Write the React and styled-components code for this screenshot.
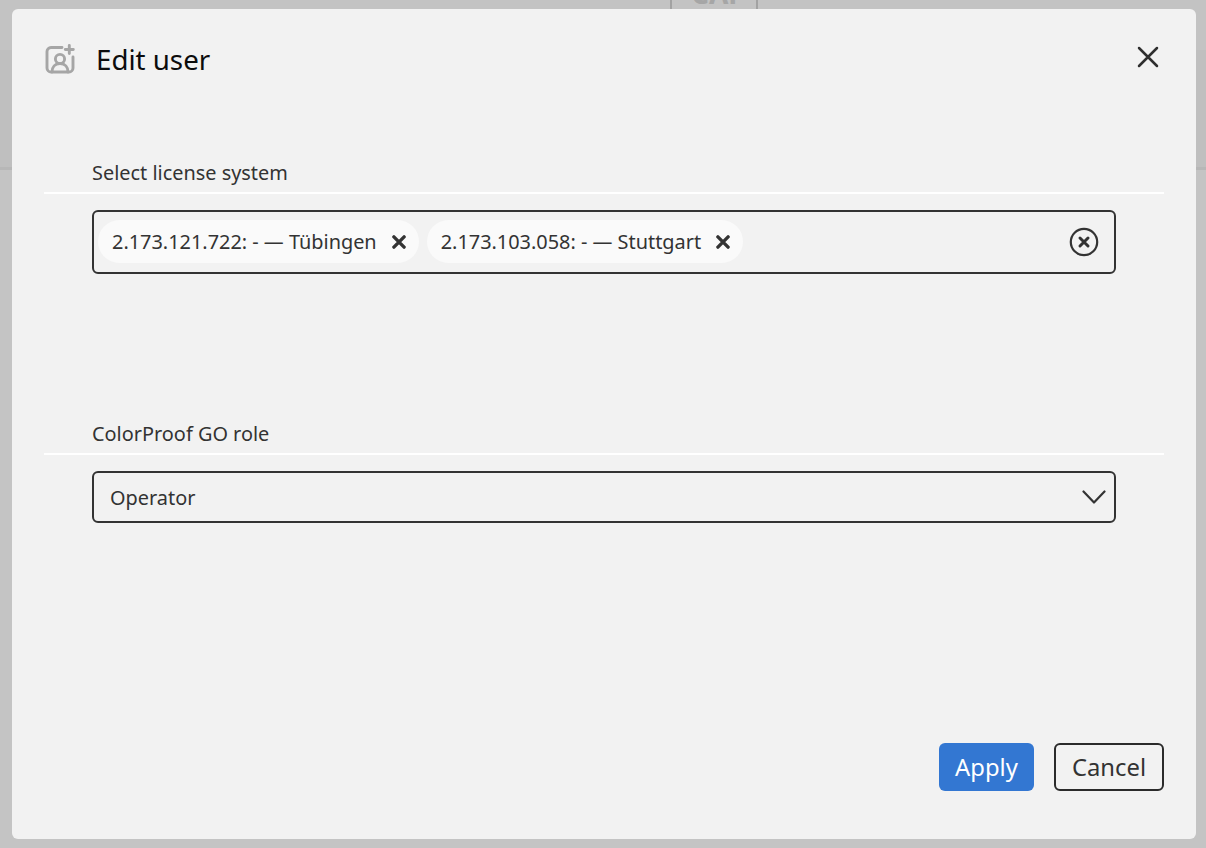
import React from "react";
import styled, { createGlobalStyle } from "styled-components";

const Global = createGlobalStyle`
  html, body { margin: 0; padding: 0; height: 100%; }
  body { font-family: "Noto Sans", "Liberation Sans", sans-serif; background: #c4c4c4; overflow: hidden; }
  * { box-sizing: border-box; }
`;

const Backdrop = styled.div`
  width: 1206px;
  height: 848px;
  position: relative;
  background: #c4c4c4;
  display: flex;
  flex-direction: column;
`;
const BackTop = styled.div`
  height: 50px;
  background: #c3c3c3;
  display: flex;
  justify-content: center;
  padding-left: 222px;
`;
const BackTab = styled.div`
  width: 88px;
  height: 9px;
  border: 2px solid #a2a2a2;
  border-top: 0;
  border-bottom: 0;
  overflow: hidden;
  color: #a6a6a6;
  font-size: 28px;
  font-weight: 700;
  line-height: 0;
  padding-left: 19px;
  white-space: nowrap;
`;
const BackTabText = styled.span`
  display: block;
  margin-top: -7px;
`;
const BackStrip = styled.div`
  height: 120px;
  background: #bfbfbf;
  border-bottom: 3px solid #b7b7b7;
`;

const Modal = styled.div`
  position: absolute;
  left: 12px;
  top: 9px;
  width: 1184px;
  height: 830px;
  background: #f2f2f2;
  border-radius: 6px;
  display: flex;
  flex-direction: column;
`;
const Header = styled.header`
  height: 100px;
  padding: 34px 36px 0 32px;
  display: flex;
  align-items: flex-start;
`;
const TitleIcon = styled.svg`
  width: 34px;
  height: 34px;
  flex: none;
`;
const Title = styled.h1`
  margin: 0 0 0 18px;
  font-size: 27.7px;
  font-weight: 400;
  line-height: 32px;
  color: #0c0c0c;
  flex: 1;
`;
const CloseButton = styled.button`
  border: 0;
  background: none;
  padding: 0;
  width: 24px;
  height: 24px;
  margin-top: 2px;
  display: block;
  color: #2f2f2f;
`;
const Section = styled.section`
  display: flex;
  flex-direction: column;
  margin: ${(p) => p.$top}px 32px 0;
`;
const Label = styled.div`
  font-size: 19.9px;
  line-height: 24px;
  color: #333;
  padding-left: 48px;
  height: 31px;
`;
const Rule = styled.div`
  height: 2px;
  background: #ffffff;
`;
const MultiBox = styled.div`
  margin: 16px 48px 0;
  height: 64px;
  border: 2px solid #333;
  border-radius: 6px;
  padding: 0 15px 0 4px;
  display: flex;
  align-items: center;
  gap: 8px;
`;
const Chip = styled.div`
  height: 43px;
  border-radius: 22px;
  background: #fafafa;
  padding: 0 13px 1px 14px;
  display: flex;
  align-items: center;
  gap: 15px;
  font-size: 19.9px;
  color: #333;
  white-space: nowrap;
  margin-top: -1px;
`;
const ChipX = styled.svg`
  width: 14px;
  height: 14px;
  flex: none;
  margin-top: 1px;
`;
const Spacer = styled.div`
  flex: 1;
`;
const ClearIcon = styled.svg`
  width: 30px;
  height: 30px;
  flex: none;
`;
const SelectBox = styled.div`
  margin: 16px 48px 0;
  height: 52px;
  border: 2px solid #333;
  border-radius: 6px;
  padding: 0 8px 0 16px;
  display: flex;
  align-items: center;
  justify-content: space-between;
  font-size: 19.9px;
  color: #333;
`;
const Footer = styled.footer`
  margin-top: auto;
  padding: 0 32px 48px;
  display: flex;
  justify-content: flex-end;
  gap: 20px;
`;
const Button = styled.button`
  height: 48px;
  width: ${(p) => p.$w}px;
  border-radius: 6px;
  font-family: inherit;
  font-size: 23.8px;
  padding: 0 0 1px;
  border: ${(p) => (p.$primary ? "0" : "2px solid #2b2b2b")};
  background: ${(p) => (p.$primary ? "#3377d2" : "transparent")};
  color: ${(p) => (p.$primary ? "#fff" : "#333")};
`;

const X = () => (
  <ChipX viewBox="0 0 14 14" fill="none" stroke="#333" strokeWidth="3.4" strokeLinecap="round">
    <path d="M1.9 1.9l10.2 10.2M12.1 1.9L1.900 12.100" />
  </ChipX>
);

export default function App() {
  return (
    <>
      <Global />
      <Backdrop>
        <BackTop>
          <BackTab><BackTabText>CAP</BackTabText></BackTab>
        </BackTop>
        <BackStrip />
        <Modal>
          <Header>
            <TitleIcon viewBox="0 0 34 34" fill="none" stroke="#a6a6a6" strokeWidth="2.900" strokeLinecap="round" strokeLinejoin="round">
              <path d="M18 4.500H7a4 4 0 0 0-4 4V25a4 4 0 0 0 4 4H25a4 4 0 0 0 4-4V14" />
              <circle cx="16" cy="16" r="4.600" />
              <path d="M8 29c0-5 3-8.500 8-8.500s8 3.500 8 8.500" />
              <path d="M25.300 2.500v8M21.300 6.500h8" />
            </TitleIcon>
            <Title>Edit user</Title>
            <CloseButton aria-label="Close">
              <svg width="24" height="24" viewBox="0 0 24 24" fill="none" stroke="currentColor" strokeWidth="2.500" strokeLinecap="round">
                <path d="M3 3l18 18M21 3L3 21" />
              </svg>
            </CloseButton>
          </Header>
          <Section $top={52}>
            <Label>Select license system</Label>
            <Rule />
            <MultiBox>
              <Chip>2.173.121.722: - — Tübingen<X /></Chip>
              <Chip>2.173.103.058: - — Stuttgart<X /></Chip>
              <Spacer />
              <ClearIcon viewBox="0 0 30 30" fill="none" stroke="#333" strokeLinecap="round">
                <circle cx="15" cy="15" r="13.200" strokeWidth="2.200" />
                <path d="M11 11l8 8M19 11l-8 8" strokeWidth="3" />
              </ClearIcon>
            </MultiBox>
          </Section>
          <Section $top={148}>
            <Label>ColorProof GO role</Label>
            <Rule />
            <SelectBox>
              Operator
              <svg width="24" height="24" viewBox="0 0 24 24" fill="none" stroke="#333" strokeWidth="2.200" strokeLinecap="round" strokeLinejoin="round">
                <path d="M1.500 6.500L12 17.500 22.500 6.500" />
              </svg>
            </SelectBox>
          </Section>
          <Footer>
            <Button $primary $w={95}>Apply</Button>
            <Button $w={110}>Cancel</Button>
          </Footer>
        </Modal>
      </Backdrop>
    </>
  );
}
